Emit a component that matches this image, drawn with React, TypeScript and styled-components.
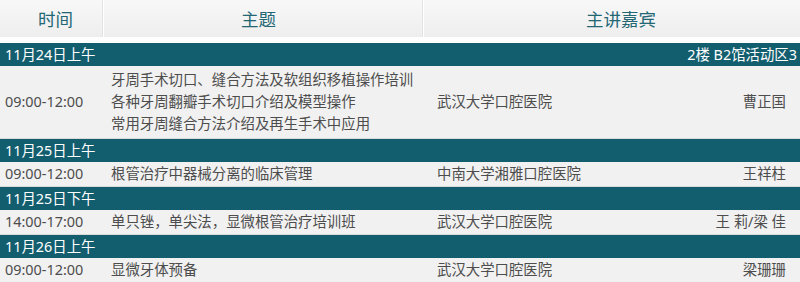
import React from 'react'
import styled, { createGlobalStyle } from 'styled-components'

const GlobalStyle = createGlobalStyle`
  body {
    margin: 0;
    background: #fff;
    font-family: "Noto Sans", "Noto Sans CJK SC", sans-serif;
  }
`

const Table = styled.div`
  width: 800px;
`

const Head = styled.div`
  display: grid;
  grid-template-columns: 103px 320px 1fr;
  height: 37px;
  margin-bottom: 6px;
  background: linear-gradient(#f8f8f8, #eeeeee);
`

const HeadCell = styled.div<{ $shift?: number }>`
  display: flex;
  align-items: center;
  justify-content: center;
  padding-left: ${p => Math.max(p.$shift || 0, 0)}px;
  padding-right: ${p => Math.max(-(p.$shift || 0), 0)}px;
  color: #236775;
  font-size: 17.5px;
  border-left: 1px solid #ffffff;
  border-right: 1px solid #e3e3e3;
  &:first-child { border-left: none; }
  &:last-child { border-right: none; }
`

const DateBar = styled.div`
  display: flex;
  justify-content: space-between;
  height: 23px;
  line-height: 23px;
  padding: 0 3px 0 5px;
  background: #135e6e;
  color: #fff;
  font-size: 14.4px;
`

const Row = styled.div`
  display: grid;
  grid-template-columns: 103px 320px 1fr auto;
  align-items: center;
  background: #f1f1f1;
  border-bottom: 1px solid #d9d9d9;
  color: #4d4d4d;
  font-size: 14.4px;
  line-height: 22px;
`

const Time = styled.div`
  padding-left: 5px;
`

const Topic = styled.div<{ $multi?: boolean }>`
  padding: ${p => (p.$multi ? '3px 0 3px' : '1px 0 1px')} 8px;
  white-space: nowrap;
`

const Place = styled.div`
  padding-left: 14px;
`

const Speaker = styled.div`
  padding-right: 14px;
  white-space: pre;
`

const sessions = [
  {
    date: '11月24日上午',
    room: '2楼 B2馆活动区3',
    time: '09:00-12:00',
    topics: ['牙周手术切口、缝合方法及软组织移植操作培训', '各种牙周翻瓣手术切口介绍及模型操作', '常用牙周缝合方法介绍及再生手术中应用'],
    place: '武汉大学口腔医院',
    speaker: '曹正国',
  },
  { date: '11月25日上午', time: '09:00-12:00', topics: ['根管治疗中器械分离的临床管理'], place: '中南大学湘雅口腔医院', speaker: '王祥柱' },
  { date: '11月25日下午', time: '14:00-17:00', topics: ['单只锉，单尖法，显微根管治疗培训班'], place: '武汉大学口腔医院', speaker: '王 莉/梁 佳' },
  { date: '11月26日上午', time: '09:00-12:00', topics: ['显微牙体预备'], place: '武汉大学口腔医院', speaker: '梁珊珊' },
]

export default function App() {
  return (
    <>
      <GlobalStyle />
      <Table>
        <Head>
          <HeadCell $shift={9}>时间</HeadCell>
          <HeadCell $shift={-9}>主题</HeadCell>
          <HeadCell $shift={18}>主讲嘉宾</HeadCell>
        </Head>
        {sessions.map(s => (
          <div key={s.date + s.time}>
            <DateBar>
              <span>{s.date}</span>
              <span>{s.room}</span>
            </DateBar>
            <Row>
              <Time>{s.time}</Time>
              <Topic $multi={s.topics.length > 1}>
                {s.topics.map(t => <div key={t}>{t}</div>)}
              </Topic>
              <Place>{s.place}</Place>
              <Speaker>{s.speaker}</Speaker>
            </Row>
          </div>
        ))}
      </Table>
    </>
  )
}
